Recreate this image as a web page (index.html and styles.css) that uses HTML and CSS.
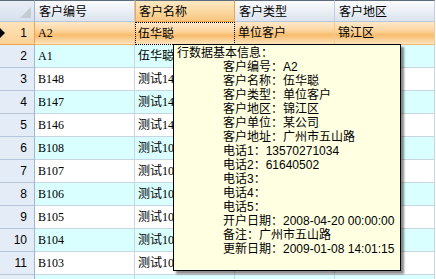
FILE: index.html
```html
<!DOCTYPE html>
<html lang="zh-CN">
<head>
    <meta charset="UTF-8">
    <title>客户列表</title>
    <link rel="stylesheet" href="styles.css">
</head>
<body>
    <div class="grid">
        <table class="data">
            <colgroup>
                <col class="c-rh">
                <col class="c-col">
                <col class="c-col">
                <col class="c-col">
                <col class="c-col">
            </colgroup>
            <thead>
                <tr>
                    <th class="corner"><span class="corner-mark"></span></th>
                    <th>客户编号</th>
                    <th class="hd-sel">客户名称</th>
                    <th>客户类型</th>
                    <th>客户地区</th>
                </tr>
            </thead>
            <tbody>
                <tr class="cur">
                    <td class="rh"><span class="arrow"></span>1</td>
                    <td>A2</td>
                    <td class="focus">伍华聪</td>
                    <td>单位客户</td>
                    <td>锦江区</td>
                </tr>
                <tr class="alt"><td class="rh">2</td><td>A1</td><td>伍华聪</td><td></td><td></td></tr>
                <tr><td class="rh">3</td><td>B148</td><td>测试148</td><td></td><td></td></tr>
                <tr class="alt"><td class="rh">4</td><td>B147</td><td>测试147</td><td></td><td></td></tr>
                <tr><td class="rh">5</td><td>B146</td><td>测试146</td><td></td><td></td></tr>
                <tr class="alt"><td class="rh">6</td><td>B108</td><td>测试108</td><td></td><td></td></tr>
                <tr><td class="rh">7</td><td>B107</td><td>测试107</td><td></td><td></td></tr>
                <tr class="alt"><td class="rh">8</td><td>B106</td><td>测试106</td><td></td><td></td></tr>
                <tr><td class="rh">9</td><td>B105</td><td>测试105</td><td></td><td></td></tr>
                <tr class="alt"><td class="rh">10</td><td>B104</td><td>测试104</td><td></td><td></td></tr>
                <tr><td class="rh">11</td><td>B103</td><td>测试103</td><td></td><td></td></tr>
                <tr class="alt"><td class="rh"></td><td></td><td></td><td></td><td></td></tr>
            </tbody>
        </table>

        <!-- row tooltip -->
        <div class="tip">
            <div class="tip-title">行数据基本信息：</div>
            <div class="tip-lines">
                <div>客户编号：A2</div>
                <div>客户名称：伍华聪</div>
                <div>客户类型：单位客户</div>
                <div>客户地区：锦江区</div>
                <div>客户单位：某公司</div>
                <div>客户地址：广州市五山路</div>
                <div>电话1：13570271034</div>
                <div>电话2：61640502</div>
                <div>电话3：</div>
                <div>电话4：</div>
                <div>电话5：</div>
                <div>开户日期：2008-04-20 00:00:00</div>
                <div>备注：广州市五山路</div>
                <div>更新日期：2009-01-08 14:01:15</div>
            </div>
        </div>
    </div>
</body>
</html>
```

FILE: styles.css
```css
body {
    margin: 0;
    padding: 0;
    background-color: #ffffff;
    overflow: hidden;
}

.grid {
    position: relative;
    width: 436px;
    height: 279px;
    overflow: hidden;
    background-color: #ffffff;
}

.data {
    border-collapse: separate;
    border-spacing: 0;
    table-layout: fixed;
    width: 435px;
    font-family: "Liberation Serif", "Noto Sans CJK SC", serif;
    font-size: 12px;
    color: #000000;
}

.c-rh {
    width: 35px;
}

.c-col {
    width: 100px;
}

.data th,
.data td {
    box-sizing: border-box;
    padding: 0 0 0 3px;
    white-space: nowrap;
    overflow: hidden;
    text-align: left;
    font-weight: normal;
    line-height: 14px;
}

/* header */
.data th {
    height: 22px;
    padding-left: 4px;
    font-family: "Noto Sans CJK SC", sans-serif;
    background: linear-gradient(#fafbfd, #e9eef5 55%, #dbe3ed);
    border-top: 1px solid #5d6b7c;
    border-right: 1px solid #c3cfdd;
    border-bottom: 1px solid #b7c6d8;
}

.data th.hd-sel {
    background: linear-gradient(#fde9c4, #fbd79e 55%, #f8c57f);
    border-right: 1px solid #f0a447;
    border-bottom: 1px solid #f0a447;
    border-left: 1px solid #f0a447;
    padding-left: 3px;
}

.data th.corner {
    position: relative;
    padding: 0;
    background: linear-gradient(#e8eef6, #d6e0ec);
    border-right: 1px solid #9eb6ce;
}

.corner-mark {
    position: absolute;
    right: 3px;
    bottom: 3px;
    width: 0;
    height: 0;
    border-left: 11px solid transparent;
    border-bottom: 11px solid #c4cbd3;
}

/* body rows */
.data td {
    height: 23px;
    background-color: #ffffff;
    border-right: 1px solid #c8d5e4;
    border-bottom: 1px solid #c8d5e4;
}

.data tr.alt td {
    background-color: #daffff;
}

.data td.rh {
    position: relative;
    text-align: right;
    padding: 0 7px 0 0;
    font-family: "Liberation Sans", sans-serif;
    background-color: #e4ecf7;
    border-right: 1px solid #9eb6ce;
    border-bottom: 1px solid #b5c6da;
}

.data tr.alt td.rh {
    background-color: #e4ecf7;
}

.data tr.cur td {
    background: linear-gradient(#fee9cb, #fbd49c 40%, #f8bd6e 60%, #fde4c0);
    border-bottom: 1px solid #f3b86a;
    border-right: 1px solid #f3c98f;
}

.data tr.cur td.rh {
    background: linear-gradient(#fde3ba, #fbd197);
    border-right: 1px solid #f0a447;
    border-bottom: 1px solid #f0a447;
}

.data tr.cur td.focus {
    padding-left: 2px;
    border: 1px dotted #000000;
}

.arrow {
    position: absolute;
    left: 0;
    top: 6px;
    width: 0;
    height: 0;
    border-top: 5px solid transparent;
    border-bottom: 5px solid transparent;
    border-left: 5px solid #000000;
}

/* tooltip */
.tip {
    position: absolute;
    left: 173px;
    top: 44px;
    width: 228px;
    height: 227px;
    box-sizing: border-box;
    padding: 1px 0 0 3px;
    background-color: #ffffe1;
    border: 1px solid #000000;
    box-shadow: 3px 3px 2px rgba(0, 0, 0, 0.45);
    font-family: "Liberation Sans", "Noto Sans CJK SC", sans-serif;
    font-size: 12px;
    line-height: 14px;
    color: #000000;
    white-space: nowrap;
}

.tip-lines {
    margin-left: 46px;
}
```
